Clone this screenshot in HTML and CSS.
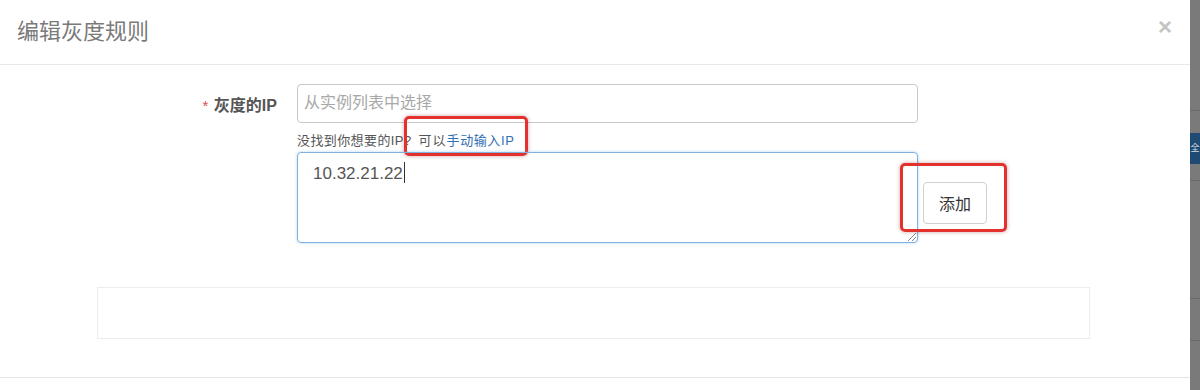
FILE: index.html
```html
<!DOCTYPE html>
<html lang="zh-CN">
<head>
<meta charset="utf-8">
<title>编辑灰度规则</title>
<link rel="stylesheet" href="styles.css">
</head>
<body>
<div class="screen">
  <div class="modal">
    <div class="modal-header">
      <h4 class="modal-title">编辑灰度规则</h4>
      <span class="close">×</span>
    </div>
    <div class="modal-body">
      <div class="form-row">
        <label class="form-label"><span class="req">*</span> 灰度的IP</label>
        <div class="form-control-wrap">
          <div class="select-input">从实例列表中选择</div>
          <div class="help">没找到你想要的IP? <span class="gap">可以</span><a class="link">手动输入IP</a><span class="mark mark-link"></span></div>
          <div class="manual">
            <div class="textarea">10.32.21.22<span class="caret"></span><span class="grip"></span></div>
            <div class="btn-wrap">
              <button class="btn">添加</button>
              <span class="mark mark-btn"></span>
            </div>
          </div>
        </div>
      </div>
      <div class="empty-box"></div>
    </div>
    <div class="modal-footer"></div>
  </div>
  <div class="backdrop">
    <div class="bd-line"></div>
    <div class="bd-tab">全</div>
    <div class="bd-line l2"></div>
    <div class="bd-line l3"></div>
    <div class="bd-line l4"></div>
  </div>
</div>
</body>
</html>
```
FILE: styles.css
```css
* { box-sizing: border-box; }
html, body { margin: 0; padding: 0; }
body {
  width: 1200px;
  height: 390px;
  overflow: hidden;
  background: #fff;
  font-family: "Liberation Sans", "Noto Sans CJK SC", sans-serif;
  color: #555;
}
.screen { display: flex; height: 390px; }
.modal {
  width: 1190px;
  background: #fff;
  display: flex;
  flex-direction: column;
}
.modal-header {
  height: 65px;
  border-bottom: 1px solid #e8e8e8;
  display: flex;
  align-items: center;
  justify-content: space-between;
  padding: 0 18px 6px 17px;
}
.modal-title {
  margin: 0;
  font-size: 22px;
  font-weight: normal;
  color: #7a7a7a;
}
.close {
  font-size: 24px;
  font-weight: bold;
  color: #c4c4c4;
  line-height: 1;
  margin-top: -4px;
}
.modal-body {
  padding-top: 19px;
  flex: 1;
}
.form-row { display: flex; }
.form-label {
  width: 297px;
  padding-right: 20px;
  text-align: right;
  font-size: 16px;
  font-weight: bold;
  color: #555;
  padding-top: 8px;
}
.req { color: #e04a4a; font-weight: normal; margin-right: 1px; font-size: 15px; }
.form-control-wrap { width: 720px; position: relative; }
.select-input {
  width: 621px;
  height: 39px;
  border: 1px solid #c9c9c9;
  border-radius: 4px;
  padding: 0 6px;
  line-height: 36px;
  font-size: 16px;
  color: #a8a8a8;
}
.help {
  font-size: 13px;
  color: #555;
  margin-top: 9px;
  height: 20px;
  line-height: 18px;
  position: relative;
  letter-spacing: 0.4px;
}
.gap { margin-left: 3px; letter-spacing: 1px; }
.link { color: #2f6fb3; letter-spacing: 0.6px; }
.mark {
  position: absolute;
  border: 3px solid #e3322e;
  border-radius: 5px;
  box-shadow: 0 0 4px rgba(120, 0, 0, 0.35);
  pointer-events: none;
}
.mark-link { left: 107px; top: -16px; width: 124px; height: 40px; }
.manual { display: flex; }
.textarea {
  width: 621px;
  height: 91px;
  border: 1px solid #7fb0de;
  border-radius: 4px;
  box-shadow: 0 0 3px rgba(102, 175, 233, 0.55);
  padding: 9px 15px;
  font-size: 17px;
  color: #555;
  position: relative;
}
.caret {
  display: inline-block;
  width: 1px;
  height: 21px;
  background: #333;
  vertical-align: -4px;
  margin-left: 1px;
}
.grip {
  position: absolute;
  right: 1px;
  bottom: 1px;
  width: 8px;
  height: 8px;
  background: linear-gradient(135deg, transparent 45%, #888 45%, #888 55%, transparent 55%, transparent 70%, #888 70%, #888 80%, transparent 80%);
}
.btn-wrap { position: relative; padding-left: 5px; padding-top: 30px; }
.btn {
  width: 64px;
  height: 42px;
  border: 1px solid #d0d0d0;
  border-radius: 4px;
  background: #fff;
  font-family: "Liberation Sans", "Noto Sans CJK SC", sans-serif;
  font-size: 16px;
  color: #333;
  padding: 0;
}
.mark-btn { left: -18px; top: 11px; width: 107px; height: 69px; }
.empty-box {
  margin: 44px 0 0 97px;
  width: 993px;
  height: 52px;
  border: 1px solid #ededed;
}
.modal-footer {
  height: 13px;
  border-top: 1px solid #e3e3e3;
}
.backdrop {
  width: 10px;
  background: #7a7a7a;
  position: relative;
  overflow: hidden;
}
.bd-tab {
  position: absolute;
  top: 133px;
  left: 0;
  width: 10px;
  height: 31px;
  background: #1e4a74;
  color: #d8dde4;
  font-size: 9px;
  line-height: 31px;
  text-align: center;
}
.bd-line { position: absolute; left: 0; width: 10px; height: 1px; background: #6a6a6a; top: 110px; }
.bd-line.l2 { top: 180px; }
.bd-line.l3 { top: 298px; }
.bd-line.l4 { top: 340px; }
```
